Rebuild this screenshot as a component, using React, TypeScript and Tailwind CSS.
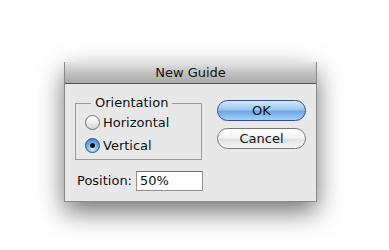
import React from "react";

const font = { fontFamily: '"DejaVu Sans", "Liberation Sans", sans-serif' };

function Radio({ checked, label }: { checked?: boolean; label: string }) {
  return (
    <div className="flex items-center h-[23px]">
      <div
        className={
          "w-[15px] h-[15px] rounded-full flex items-center justify-center border " +
          (checked
            ? "border-[#2f4f86] bg-[radial-gradient(circle_at_50%_78%,#d0eaff_0%,#6aa6e8_55%,#3a76c8_100%)]"
            : "border-[#707070] bg-[linear-gradient(180deg,#ffffff_0%,#eeeeee_50%,#d4d4d4_100%)]")
        }
      >
        {checked && <div className="w-[5px] h-[5px] rounded-full bg-[#111]" />}
      </div>
      <span className="ml-[3px] text-[13px] leading-none text-[#111]">{label}</span>
    </div>
  );
}

export default function App() {
  return (
    <div className="w-[389px] h-[250px] bg-white overflow-hidden" style={font}>
      <div className="pt-[62px] pl-[64px]">
        <div className="w-[253px] h-[140px] bg-[#e8e8e8] border-x border-b border-[#8a8a8a] shadow-[0_10px_24px_rgba(0,0,0,0.55)] flex flex-col">
          <div className="h-[22px] flex items-center justify-center bg-[linear-gradient(180deg,#e6e6e6_0%,#c6c6c6_45%,#aaaaaa_100%)] border-b border-[#555] text-[13px] text-[#111]">
            New Guide
          </div>
          <div className="flex flex-1 pl-[10px] pr-[10px]">
            <div className="flex flex-col">
              <div className="relative mt-[19px] w-[127px] h-[57px] border border-[#9a9a9a] pt-[7px] pl-[9px]">
                <span className="absolute -top-[9px] left-[15px] px-[4px] bg-[#e8e8e8] text-[13px] leading-[16px] text-[#111]">
                  Orientation
                </span>
                <Radio label="Horizontal" />
                <Radio checked label="Vertical" />
              </div>
              <div className="flex items-center mt-[11px] ml-[2px]">
                <span className="text-[13px] text-[#111]">Position:</span>
                <div className="ml-[4px] w-[67px] h-[20px] bg-white border border-[#8f8f8f] border-t-[#6f6f6f] flex items-center pl-[3px] text-[13px] text-[#111]">
                  50%
                </div>
              </div>
            </div>
            <div className="ml-auto flex flex-col mt-[16px] gap-[7px]">
              <button className="w-[89px] h-[21px] rounded-full border border-[#2e4f8e] bg-[linear-gradient(180deg,#d4e8fc_0%,#9cc6f2_45%,#6fa7e6_55%,#a6d0f8_100%)] text-[13px] text-[#111] flex items-center justify-center">
                OK
              </button>
              <button className="w-[89px] h-[21px] rounded-full border border-[#777] bg-[linear-gradient(180deg,#ffffff_0%,#f4f4f4_45%,#e2e2e2_55%,#f6f6f6_100%)] text-[13px] text-[#111] flex items-center justify-center">
                Cancel
              </button>
            </div>
          </div>
        </div>
      </div>
    </div>
  );
}
